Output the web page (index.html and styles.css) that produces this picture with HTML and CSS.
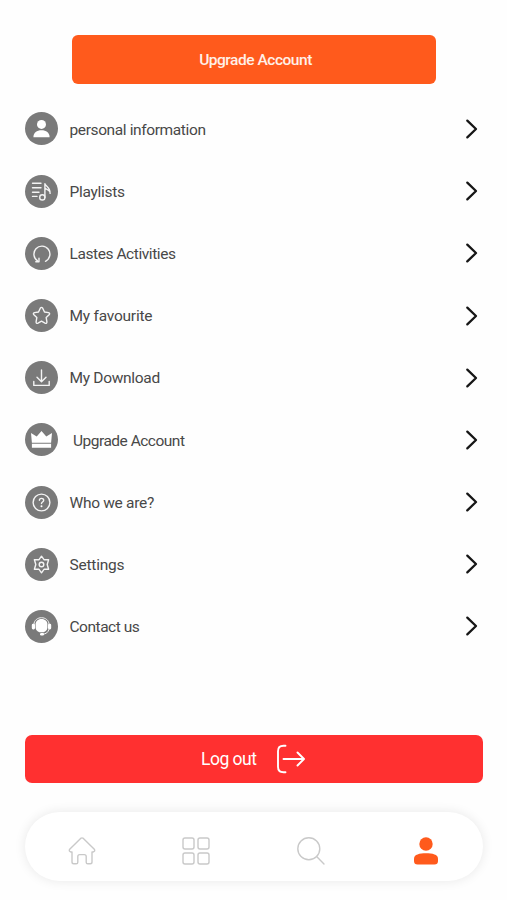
FILE: index.html
```html
<!DOCTYPE html>
<html lang="en">
<head>
  <meta charset="UTF-8">
  <meta name="viewport" content="width=device-width, initial-scale=1.0">
  <title>Profile</title>
  <link rel="stylesheet" href="styles.css">
</head>
<body>
  <!-- shared chevron -->
  <svg class="defs">
    <symbol id="chevron" viewBox="0 0 14 22">
      <path d="M2.3 2.6 L11 11 L2.3 19.4" fill="none" stroke="#161616" stroke-width="2.3" stroke-linecap="round" stroke-linejoin="round"/>
    </symbol>
  </svg>

  <main>
    <button class="upgrade-btn">Upgrade Account</button>

    <ul class="menu">
      <li>
        <svg class="icon" viewBox="0 0 33 33">
          <circle class="disc" cx="16.5" cy="16.5" r="16.5"/>
          <circle class="solid" cx="16.5" cy="12.4" r="4.5"/>
          <path class="solid" d="M8.4 25.2 C8.4 20.8 11.8 18.3 16.5 18.3 C21.2 18.3 24.6 20.8 24.6 25.2 Z"/>
        </svg>
        <span class="label personal">personal information</span>
        <svg class="arrow"><use href="#chevron"/></svg>
      </li>
      <li>
        <svg class="icon" viewBox="0 0 33 33">
          <circle class="disc" cx="16.5" cy="16.5" r="16.5"/>
          <path class="line" d="M7.5 8.2 H16 M7.5 12.7 H16 M7.5 17.2 H14 M7.5 21.4 H12"/>
          <circle class="line" cx="17.3" cy="22.4" r="2.6"/>
          <path class="line" d="M19.9 22.4 V8.6 C20.5 11.6 25.3 11.6 25.1 18.4 M20 12.8 C21.5 14.8 24 14.6 25 17"/>
        </svg>
        <span class="label playlists">Playlists</span>
        <svg class="arrow"><use href="#chevron"/></svg>
      </li>
      <li>
        <svg class="icon" viewBox="0 0 33 33">
          <circle class="disc" cx="16.5" cy="16.5" r="16.5"/>
          <path class="line" d="M20.5 24.3 A8 8 0 1 0 12.8 24"/>
          <path class="line" d="M10.8 24.8 H14 V21.2"/>
        </svg>
        <span class="label activities">Lastes Activities</span>
        <svg class="arrow"><use href="#chevron"/></svg>
      </li>
      <li>
        <svg class="icon" viewBox="0 0 33 33">
          <circle class="disc" cx="16.5" cy="16.5" r="16.5"/>
          <path class="line" d="M15.3 9.2 Q16.5 7.5 17.7 9.2 L19.5 13 L23.5 13.6 Q25.4 14.2 24.1 15.7 L21.2 18.6 L21.9 22.8 Q22 25 20 24.1 L16.5 22.2 L13 24.1 Q11 25 11.1 22.8 L11.8 18.6 L8.9 15.7 Q7.6 14.2 9.5 13.6 L13.5 13 Z"/>
        </svg>
        <span class="label favourite">My favourite</span>
        <svg class="arrow"><use href="#chevron"/></svg>
      </li>
      <li>
        <svg class="icon" viewBox="0 0 33 33">
          <circle class="disc" cx="16.5" cy="16.5" r="16.5"/>
          <path class="line" d="M16.5 9 V20.5 M12 16.3 L16.5 20.7 L21 16.3 M8.8 20.5 V24.4 H24.2 V20.5"/>
        </svg>
        <span class="label download">My Download</span>
        <svg class="arrow"><use href="#chevron"/></svg>
      </li>
      <li>
        <svg class="icon" viewBox="0 0 33 33">
          <circle class="disc" cx="16.5" cy="16.5" r="16.5"/>
          <path class="solid" d="M6 10 L11.7 13.6 L16.5 8 L21.3 13.6 L27 10 L26.1 19.7 H6.9 Z M6.9 20.8 H26.1 V24.7 H6.9 Z"/>
        </svg>
        <span class="label account">Upgrade Account</span>
        <svg class="arrow"><use href="#chevron"/></svg>
      </li>
      <li>
        <svg class="icon" viewBox="0 0 33 33">
          <circle class="disc" cx="16.5" cy="16.5" r="16.5"/>
          <circle class="line" cx="16.5" cy="16.5" r="8.4"/>
          <path class="line" d="M14.4 14.3 C14.4 11.8 18.7 11.8 18.7 14.2 C18.7 16 16.5 15.9 16.5 17.6"/>
          <circle class="solid" cx="16.5" cy="20.3" r="1"/>
        </svg>
        <span class="label who">Who we are?</span>
        <svg class="arrow"><use href="#chevron"/></svg>
      </li>
      <li>
        <svg class="icon" viewBox="0 0 33 33">
          <circle class="disc" cx="16.5" cy="16.5" r="16.5"/>
          <path class="line" d="M16.5 8.2 L19 11.7 L23.6 11.7 L22.2 16.5 L23.6 21.3 L19 21.3 L16.5 24.8 L14 21.3 L9.4 21.3 L10.8 16.5 L9.4 11.7 L14 11.7 Z"/>
          <circle class="line" cx="16.5" cy="16.5" r="2.3"/>
        </svg>
        <span class="label settings">Settings</span>
        <svg class="arrow"><use href="#chevron"/></svg>
      </li>
      <li>
        <svg class="icon" viewBox="0 0 33 33">
          <circle class="disc" cx="16.5" cy="16.5" r="16.5"/>
          <path class="thin" d="M8.9 14.2 C9.3 5.4 23.7 5.4 24.1 14.2"/>
          <path class="solid" d="M10.6 13.8 C11.2 7.4 21.8 7.4 22.4 13.8 V17.4 C22 24 11 24 10.6 17.4 Z"/>
          <rect class="solid" x="6.8" y="13.8" width="3.2" height="5.6" rx="1.3"/>
          <rect class="solid" x="23" y="13.8" width="3.2" height="5.6" rx="1.3"/>
          <path class="thin" d="M23.9 19.5 C23.2 22.5 21 24 18 24.2"/>
          <rect class="solid" x="15" y="23" width="4" height="2.4" rx="1.2"/>
        </svg>
        <span class="label contact">Contact us</span>
        <svg class="arrow"><use href="#chevron"/></svg>
      </li>
    </ul>

    <button class="logout-btn">
      <span>Log out</span>
      <svg viewBox="0 0 30 30">
        <path d="M9.5 1.8 H7.5 Q2 1.8 2 7.3 V22.7 Q2 28.2 7.5 28.2 H9.5 M7.5 15 H27.5 M21.5 8.5 L28 15 L21.5 21.5"/>
      </svg>
    </button>
  </main>

  <nav class="tab-bar">
    <a>
      <svg viewBox="0 0 30 30">
        <path d="M13.6 2.4 Q15 1.3 16.4 2.4 L27.3 13.2 Q28.6 15.4 26 16 H25 V26 Q25 27.8 23.2 27.8 H20.8 Q19.2 27.8 19.2 26.2 V20.5 Q19.2 18.6 17.3 18.6 H12.7 Q10.8 18.6 10.8 20.5 V26.2 Q10.8 27.8 9.2 27.8 H6.8 Q5 27.8 5 26 V16 H4 Q1.4 15.4 2.7 13.2 Z"/>
      </svg>
    </a>
    <a>
      <svg viewBox="0 0 30 30">
        <rect x="2" y="2" width="11" height="11" rx="2"/>
        <rect x="17" y="2" width="11" height="11" rx="2"/>
        <rect x="2" y="17" width="11" height="11" rx="2"/>
        <rect x="17" y="17" width="11" height="11" rx="2"/>
      </svg>
    </a>
    <a>
      <svg viewBox="0 0 30 30">
        <circle cx="12.8" cy="12.8" r="11"/>
        <path d="M20.6 20.6 L28 28"/>
      </svg>
    </a>
    <a class="active">
      <svg viewBox="0 0 30 30">
        <circle cx="15" cy="8" r="6.7"/>
        <path d="M3 22.5 C3 18.5 8.5 17.2 15 17.2 C21.5 17.2 27 18.5 27 22.5 V25 Q27 28.6 23.4 28.6 H6.6 Q3 28.6 3 25 Z"/>
      </svg>
    </a>
  </nav>
</body>
</html>
```
FILE: styles.css
```css
* {
  box-sizing: border-box;
}

body {
  font-family: Roboto, "Noto Sans", sans-serif;
  margin: 0;
  padding: 35px 24px 0 24.5px;
  height: 900px;
  overflow: hidden;
  background-color: #fefefe;
  color: #484848;
}

.defs {
  display: none;
}

main {
  display: flex;
  flex-direction: column;
}

button {
  display: flex;
  align-items: center;
  justify-content: center;
  height: 48.5px;
  padding: 0;
  border: none;
  color: #fff;
  font-family: inherit;
}

.upgrade-btn {
  width: 364px;
  margin-left: 47.5px;
  padding: 2px 0 0 3px;
  border-radius: 6px;
  background-color: #ff5a1c;
  color: #fff0e8;
  font-size: 15.5px;
  font-weight: 500;
  letter-spacing: -0.47px;
}

.menu {
  list-style: none;
  margin: 14.4px 0 0;
  padding: 0;
}

.menu li {
  display: flex;
  align-items: center;
  height: 62.2px;
}

.icon {
  width: 33px;
  height: 33px;
  margin-right: 12px;
}

.disc {
  fill: #7a7a7a;
}

.solid {
  fill: #fff;
}

.line,
.thin {
  fill: none;
  stroke: #f4f4f4;
  stroke-width: 1.4;
  stroke-linecap: round;
  stroke-linejoin: round;
}

.thin {
  stroke-width: 1;
}

.label {
  flex: 1;
  padding-top: 1.5px;
  font-size: 15.5px;
}

.personal {
  letter-spacing: -0.38px;
}

.playlists,
.download {
  letter-spacing: -0.3px;
}

.activities {
  letter-spacing: -0.43px;
}

.favourite,
.settings {
  letter-spacing: -0.23px;
}

.account {
  padding-left: 3.5px;
  letter-spacing: -0.5px;
}

.who {
  letter-spacing: -0.3px;
}

.contact {
  letter-spacing: -0.48px;
}

.arrow {
  width: 14px;
  height: 22px;
  margin-right: 4px;
}

.logout-btn {
  gap: 20px;
  margin-top: 77.3px;
  border-radius: 7px;
  background-color: #ff3030;
  font-size: 17.5px;
  letter-spacing: -0.5px;
}

.logout-btn svg {
  width: 30px;
  height: 30px;
  fill: none;
  stroke: #fff;
  stroke-width: 1.9;
  stroke-linecap: round;
  stroke-linejoin: round;
}

.tab-bar {
  display: flex;
  align-items: center;
  height: 68.5px;
  margin-top: 28.7px;
  padding-top: 10px;
  border-radius: 35px;
  background-color: #fff;
  box-shadow: 0 0 12px rgba(0, 0, 0, 0.09);
}

.tab-bar a {
  flex: 1;
  display: flex;
  justify-content: center;
}

.tab-bar svg {
  width: 30px;
  height: 30px;
  fill: none;
  stroke: #c9c9c9;
  stroke-width: 1.4;
  stroke-linecap: round;
  stroke-linejoin: round;
}

.tab-bar .active svg {
  fill: #ff5a1c;
  stroke: none;
}
```
